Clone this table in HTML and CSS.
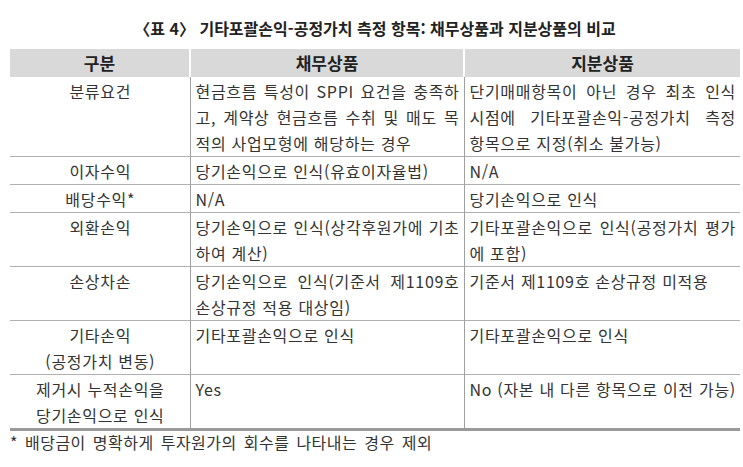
FILE: index.html
```html
<!DOCTYPE html>
<html lang="ko">
<head>
<meta charset="utf-8">
<link rel="stylesheet" href="styles.css">
</head>
<body>
<div class="page">
  <h1 class="title">〈표 4〉 기타포괄손익-공정가치 측정 항목: 채무상품과 지분상품의 비교</h1>
  <table class="cmp">
    <colgroup><col class="c1"><col class="c2"><col class="c3"></colgroup>
    <thead>
      <tr><th>구분</th><th>채무상품</th><th>지분상품</th></tr>
    </thead>
    <tbody>
      <tr>
        <td class="lab">분류요건</td>
        <td><span class="jl">현금흐름 특성이 SPPI 요건을 충족하</span><span class="jl">고, 계약상 현금흐름 수취 및 매도 목</span><span class="ll">적의 사업모형에 해당하는 경우</span></td>
        <td><span class="jl">단기매매항목이 아닌 경우 최초 인식</span><span class="jl">시점에 기타포괄손익-공정가치 측정</span><span class="ll">항목으로 지정(취소 불가능)</span></td>
      </tr>
      <tr>
        <td class="lab">이자수익</td>
        <td>당기손익으로 인식(유효이자율법)</td>
        <td>N/A</td>
      </tr>
      <tr>
        <td class="lab">배당수익*</td>
        <td>N/A</td>
        <td>당기손익으로 인식</td>
      </tr>
      <tr>
        <td class="lab">외환손익</td>
        <td><span class="jl">당기손익으로 인식(상각후원가에 기초</span><span class="ll">하여 계산)</span></td>
        <td><span class="jl">기타포괄손익으로 인식(공정가치 평가</span><span class="ll">에 포함)</span></td>
      </tr>
      <tr>
        <td class="lab">손상차손</td>
        <td><span class="jl">당기손익으로 인식(기준서 제1109호</span><span class="ll">손상규정 적용 대상임)</span></td>
        <td><span class="ll">기준서 제1109호 손상규정 미적용</span><span class="ll">&nbsp;</span></td>
      </tr>
      <tr>
        <td class="lab"><span class="ll">기타손익</span><span class="ll">(공정가치 변동)</span></td>
        <td>기타포괄손익으로 인식</td>
        <td>기타포괄손익으로 인식</td>
      </tr>
      <tr class="last">
        <td class="lab"><span class="ll">제거시 누적손익을</span><span class="ll">당기손익으로 인식</span></td>
        <td>Yes</td>
        <td>No (자본 내 다른 항목으로 이전 가능)</td>
      </tr>
    </tbody>
  </table>
  <p class="note">* 배당금이 명확하게 투자원가의 회수를 나타내는 경우 제외</p>
</div>
</body>
</html>
```
FILE: styles.css
```css
html, body {
  margin: 0;
  padding: 0;
  background: #ffffff;
}
body {
  font-family: "Noto Sans CJK KR", "Noto Sans", sans-serif;
  color: #333333;
  font-size: 16px;
  letter-spacing: 0.7px;
}
.page {
  width: 743px;
  padding: 0 3px 0 10px;
  box-sizing: border-box;
}
.title {
  margin: 0;
  padding-top: 17px;
  height: 49px;
  box-sizing: border-box;
  font-size: 16px;
  line-height: 22px;
  font-weight: bold;
  text-align: center;
  color: #222222;
  letter-spacing: 0;
}
.cmp {
  width: 730px;
  border-collapse: collapse;
  table-layout: fixed;
  margin: 0;
}
.c1 { width: 180px; }
.c2 { width: 274px; }
.c3 { width: 276px; }
.cmp th {
  background: #d9d9d9;
  height: 28px;
  padding: 0;
  font-weight: bold;
  font-size: 17px;
  letter-spacing: 0;
  color: #222222;
  text-align: center;
  border-left: 2px solid #ffffff;
  line-height: 28px;
}
.cmp th:first-child { border-left: none; }
.cmp td {
  vertical-align: top;
  padding: 1px 4px 0 5px;
  line-height: 26px;
  border-top: 1px solid #b0b0b0;
  border-left: 1px solid #a0a0a0;
  text-align: left;
}
.cmp thead + tbody tr:first-child td { border-top: none; }
.cmp td:first-child { border-left: none; }
.cmp td.lab { text-align: center; }
.cmp tr.last td { border-bottom: 3px solid #9a9a9a; }
.jl {
  display: block;
  text-align: justify;
  text-align-last: justify;
}
.ll { display: block; }
.note {
  margin: 0;
  line-height: 22px;
  font-size: 16px;
  letter-spacing: 0.5px;
  word-spacing: 2px;
}
```
